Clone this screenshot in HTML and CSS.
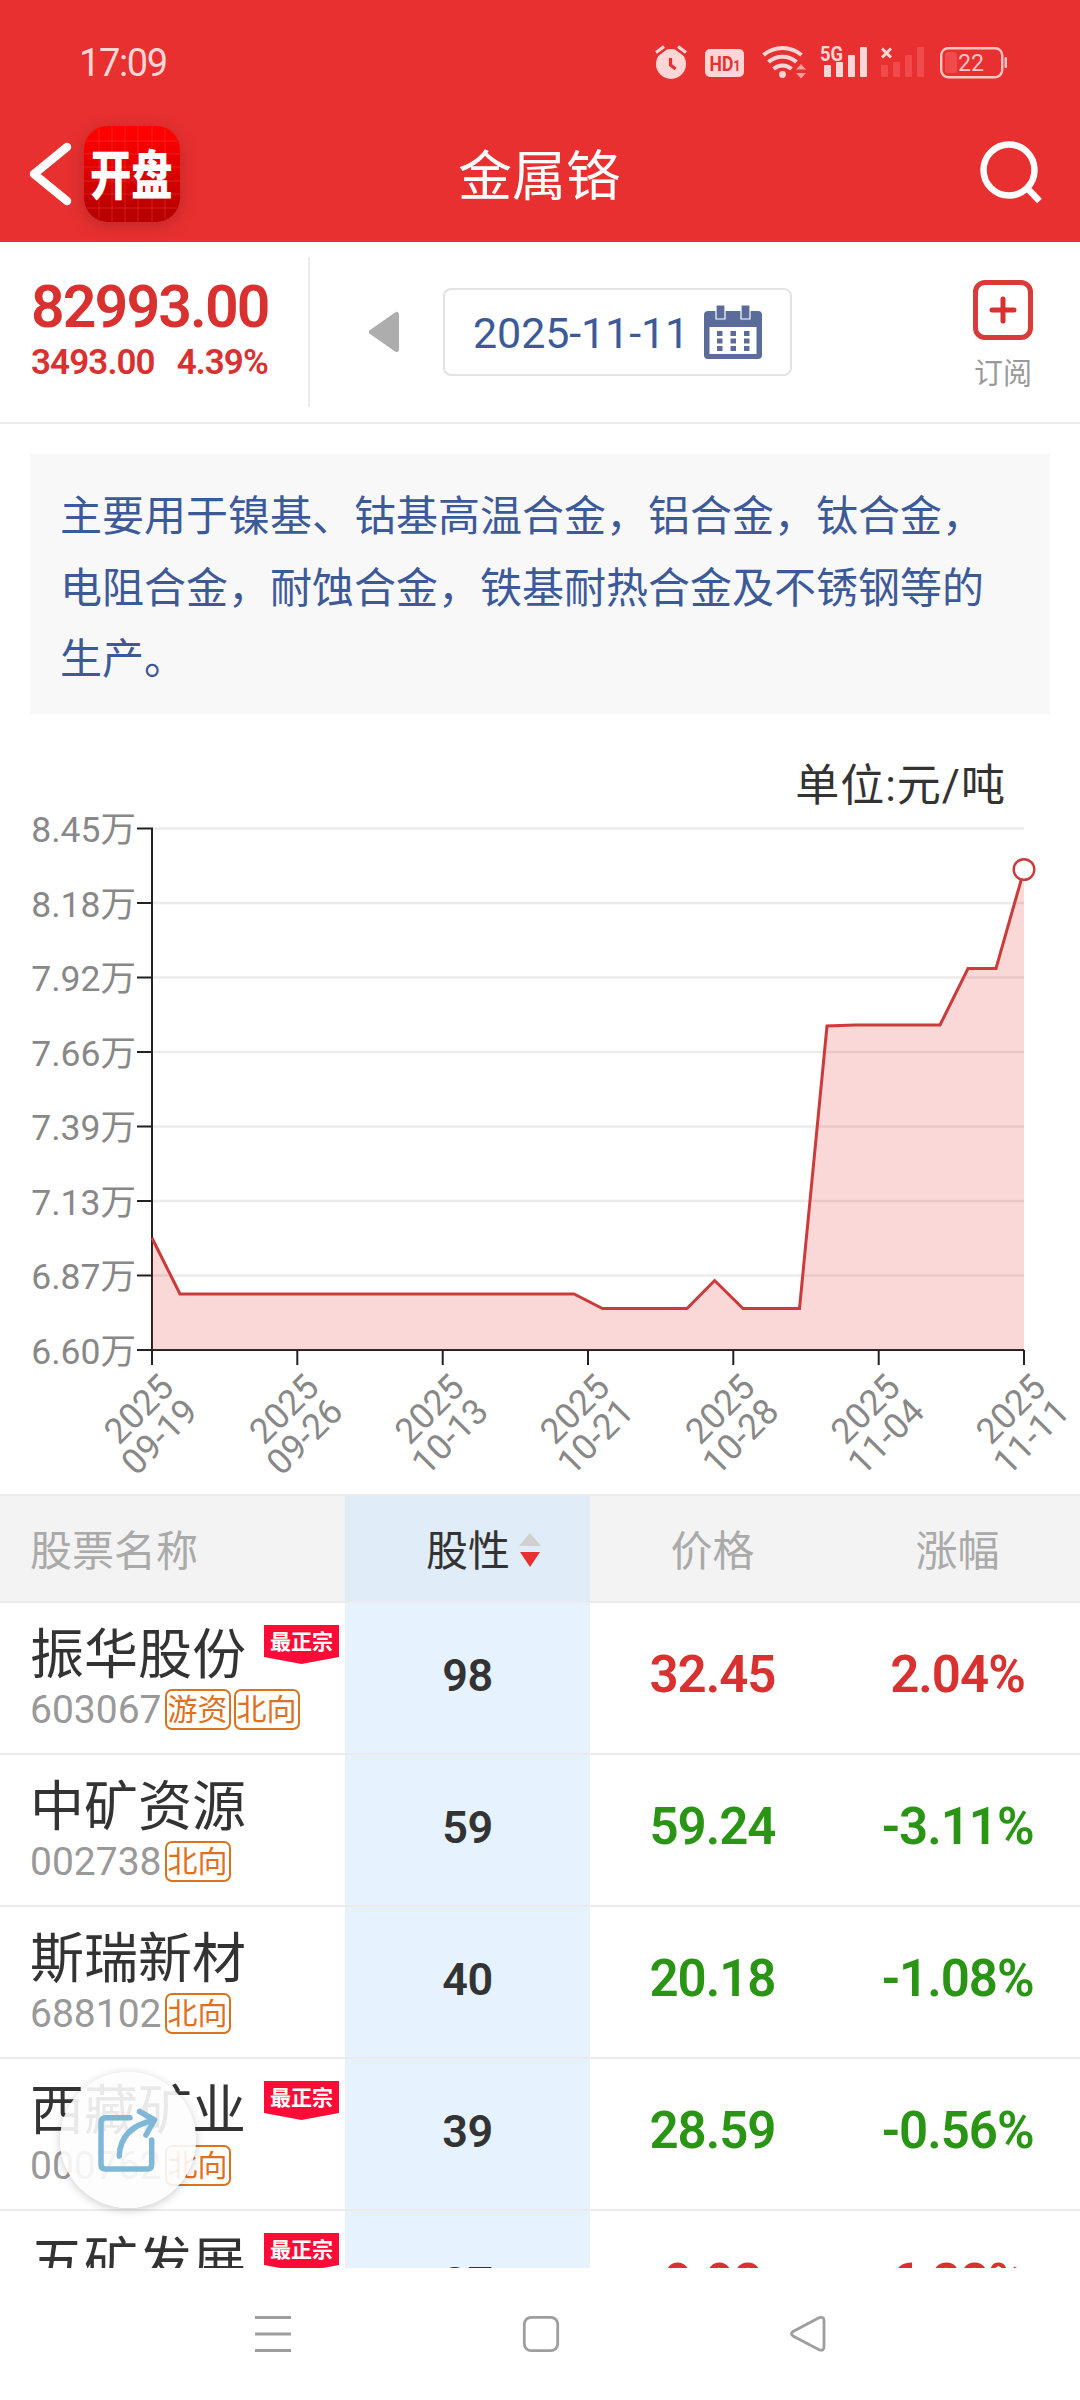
FILE: index.html
```html
<!DOCTYPE html>
<html lang="zh-CN">
<head>
    <meta charset="UTF-8">
    <meta name="viewport" content="width=device-width, initial-scale=1.0">
    <title>金属铬</title>
    <link rel="stylesheet" href="styles.css">
</head>
<body>

<header>
    <!-- 状态栏 -->
    <div class="status-bar">
        <span class="time">17:09</span>
        <div class="status-icons">
            <!-- 闹钟 -->
            <svg width="32" height="36" viewBox="0 0 32 36">
                <circle cx="16" cy="21" r="15" fill="#ffd6d6"/>
                <path d="M1.500 10 9.500 4M30.500 10 22.500 4" stroke="#e83030" stroke-width="7"/>
                <path d="M1 9.500 9 3.500M31 9.500 23 3.500" stroke="#ffd6d6" stroke-width="3.200"/>
                <path d="M15.500 15v7l5 4" fill="none" stroke="#e83030" stroke-width="3.200"/>
            </svg>
            <!-- HD -->
            <svg class="hd" width="39" height="36" viewBox="0 0 39 36">
                <rect y="6" width="39" height="28" rx="5" fill="#ffd6d6"/>
                <text x="4.500" y="27.500" font-size="21" font-weight="700" textLength="31" lengthAdjust="spacingAndGlyphs" fill="#e83030">HD<tspan font-size="15">1</tspan></text>
            </svg>
            <!-- WiFi -->
            <svg class="wifi" width="45" height="36" viewBox="0 0 45 36">
                <g fill="none" stroke="#ffd6d6" stroke-width="4">
                    <path d="M1.500 12a29 29 0 0 1 38 0"/>
                    <path d="M6.500 19a21 21 0 0 1 28 0"/>
                    <path d="M11.500 26a13.500 13.500 0 0 1 18 0"/>
                </g>
                <circle cx="20.500" cy="31.500" r="3.400" fill="#ffd6d6"/>
                <path d="M34 26.500l5-5.500 5 5.500zM34 30l5 5.500 5-5.500z" fill="#ff9c9c"/>
            </svg>
            <!-- 5G 信号 -->
            <svg class="signal" width="48" height="36" viewBox="0 0 48 36">
                <text x="0" y="17.500" font-size="21" font-weight="700" textLength="23" lengthAdjust="spacingAndGlyphs" fill="#ffd6d6">5G</text>
                <g fill="#ffd6d6">
                    <rect x="4" y="22" width="7" height="12" rx="1"/>
                    <rect x="16" y="19" width="7" height="15" rx="1"/>
                    <rect x="28" y="12" width="7" height="22" rx="1"/>
                    <rect x="40" y="4" width="7" height="30" rx="1"/>
                </g>
            </svg>
            <!-- 无信号 -->
            <svg class="no-signal" width="45" height="36" viewBox="0 0 45 36">
                <path d="M2 5.500l9 9M11 5.500l-9 9" stroke="#ffd6d6" stroke-width="3"/>
                <g fill="#f04a4a">
                    <rect x="1" y="22" width="7" height="12" rx="1"/>
                    <rect x="13" y="19" width="7" height="15" rx="1"/>
                    <rect x="25" y="12" width="7" height="22" rx="1"/>
                    <rect x="37" y="4" width="7" height="30" rx="1"/>
                </g>
            </svg>
            <!-- 电池 -->
            <svg class="battery" width="68" height="36" viewBox="0 0 68 36">
                <rect x="1.200" y="5.200" width="61" height="29" rx="7" fill="none" stroke="#ffc4c4" stroke-width="2.400"/>
                <rect x="5" y="9" width="12" height="21" rx="3" fill="#f04a4a"/>
                <rect x="64.500" y="14" width="2.500" height="11" rx="1" fill="#ffc4c4"/>
                <text x="18" y="28" font-size="24" textLength="26" lengthAdjust="spacingAndGlyphs" fill="#ffc4c4">22</text>
            </svg>
        </div>
    </div>

    <!-- 标题栏 -->
    <div class="title-bar">
        <div class="title-left">
            <svg width="44" height="66" viewBox="0 0 44 66">
                <path d="M38 6 5 33l33 27" fill="none" stroke="#fff" stroke-width="8.500" stroke-linecap="round" stroke-linejoin="round"/>
            </svg>
            <svg class="logo" width="96" height="96" viewBox="0 0 96 96">
                <defs>
                    <linearGradient id="logoBg" x1="0" y1="0" x2="0" y2="1">
                        <stop offset="0.100" stop-color="#fe0000"/>
                        <stop offset="0.900" stop-color="#b90000"/>
                    </linearGradient>
                </defs>
                <rect width="96" height="96" rx="24" fill="url(#logoBg)"/>
                <path d="M15 3v90M28 0v96M41 0v96M54 0v96M68 0v96M81 3v90M3 15h90M0 28h96M0 41h96M0 55h96M0 68h96M3 82h90" stroke="#ff6060" stroke-opacity="0.300"/>
                <text class="logo-text" transform="translate(6 68.500) scale(0.780 1)" font-size="53">开盘</text>
            </svg>
        </div>
        <h1>金属铬</h1>
        <svg class="search" width="64" height="66" viewBox="0 0 64 66">
            <circle cx="29" cy="29" r="25.500" fill="none" stroke="#fff" stroke-width="6.500"/>
            <path d="M47 47l12.500 13" stroke="#fff" stroke-width="6.500"/>
        </svg>
    </div>
</header>

<!-- 报价和日期 -->
<section class="quote">
    <div class="quote-price">
        <div class="price">82993.00</div>
        <div class="change"><span>3493.00</span><span>4.39%</span></div>
    </div>
    <svg class="prev" width="32" height="42" viewBox="0 0 32 42">
        <path d="M28.500 3.500v35L3.500 21z" fill="#adadad" stroke="#adadad" stroke-width="5" stroke-linejoin="round"/>
    </svg>
    <div class="date-box">
        <span>2025-11-11</span>
        <svg width="58" height="54" viewBox="0 0 58 54">
            <rect x="0" y="6" width="58" height="48" rx="4" fill="#5b6c9b"/>
            <rect x="5.500" y="22" width="47" height="27" fill="#fff"/>
            <path d="M12 0h9v14h-9zM37 0h9v14h-9z" fill="#5b6c9b" stroke="#fff" stroke-width="1.200"/>
            <path d="M13 26h5.500v5H13zM26.500 26H32v5h-5.500zM40 26h5.500v5H40zM13 33.500h5.500v5H13zM26.500 33.500H32v5h-5.500zM40 33.500h5.500v5H40zM13 41h5.500v5H13zM26.500 41H32v5h-5.500zM40 41h5.500v5H40z" fill="#5b6c9b"/>
        </svg>
    </div>
    <div class="subscribe">
        <svg width="60" height="60" viewBox="0 0 60 60">
            <rect x="2.500" y="2.500" width="55" height="55" rx="9.500" fill="none" stroke="#d93a3a" stroke-width="5"/>
            <path d="M30 19v22M19 30h22" stroke="#d93030" stroke-width="5" stroke-linecap="round"/>
        </svg>
        <span>订阅</span>
    </div>
</section>

<p class="description">主要用于镍基、钴基高温合金，铝合金，钛合金，电阻合金，耐蚀合金，铁基耐热合金及不锈钢等的生产。</p>

<!-- 走势图 -->
<section class="chart">
    <div class="unit">单位:元/吨</div>
    <svg width="1080" height="680" viewBox="0 814 1080 680">
        <path class="grid" d="M152 828.500h872M152 903h872M152 977.500h872M152 1052h872M152 1126.500h872M152 1201h872M152 1275.500h872"/>
        <path class="axis" d="M137 828.500h15V1350M137 903h15M137 977.500h15M137 1052h15M137 1126.500h15M137 1201h15M137 1275.500h15M137 1350h887M152 1350v15M297.300 1350v15M442.700 1350v15M588 1350v15M733.300 1350v15M878.700 1350v15M1024 1350v15"/>
        <path class="area" d="M152 1238 180 1294H574L602.500 1308.500H687L714.600 1280.500 743 1308.500H799.500L827 1026 855 1025H940L968 968.500H996L1024 870V1350H152z"/>
        <path class="line" d="M152 1238 180 1294H574L602.500 1308.500H687L714.600 1280.500 743 1308.500H799.500L827 1026 855 1025H940L968 968.500H996L1024 870"/>
        <circle class="point" cx="1024" cy="869.500" r="10.300"/>
        <g class="label">
            <text x="136" y="842">8.45万</text>
            <text x="136" y="916.500">8.18万</text>
            <text x="136" y="991">7.92万</text>
            <text x="136" y="1065.500">7.66万</text>
            <text x="136" y="1140">7.39万</text>
            <text x="136" y="1214.500">7.13万</text>
            <text x="136" y="1289">6.87万</text>
            <text x="136" y="1363.500">6.60万</text>
        </g>
        <g class="label">
            <g transform="translate(175.500 1389.500) rotate(-45)"><text>2025</text><text y="34">09-19</text></g>
            <g transform="translate(320.800 1389.500) rotate(-45)"><text>2025</text><text y="34">09-26</text></g>
            <g transform="translate(466.200 1389.500) rotate(-45)"><text>2025</text><text y="34">10-13</text></g>
            <g transform="translate(611.500 1389.500) rotate(-45)"><text>2025</text><text y="34">10-21</text></g>
            <g transform="translate(756.800 1389.500) rotate(-45)"><text>2025</text><text y="34">10-28</text></g>
            <g transform="translate(902.200 1389.500) rotate(-45)"><text>2025</text><text y="34">11-04</text></g>
            <g transform="translate(1047.500 1389.500) rotate(-45)"><text>2025</text><text y="34">11-11</text></g>
        </g>
    </svg>
</section>

<!-- 股票列表 -->
<section class="stocks">
    <div class="row head">
        <div class="name-cell">股票名称</div>
        <div class="cell active">
            股性
            <svg width="22" height="34" viewBox="0 0 22 34">
                <path d="M11 0l11 13H0z" fill="#d0d0d0"/>
                <path d="M1 19h20L11 34z" fill="#e83030"/>
            </svg>
        </div>
        <div class="cell">价格</div>
        <div class="cell">涨幅</div>
    </div>

    <div class="row">
        <div class="name-cell">
            <div class="name">振华股份</div>
            <div class="code">603067<span class="tag">游资</span><span class="tag">北向</span></div>
            <div class="badge">最正宗</div>
        </div>
        <div class="cell active">98</div>
        <div class="cell up">32.45</div>
        <div class="cell up">2.04%</div>
    </div>

    <div class="row">
        <div class="name-cell">
            <div class="name">中矿资源</div>
            <div class="code">002738<span class="tag">北向</span></div>
        </div>
        <div class="cell active">59</div>
        <div class="cell down">59.24</div>
        <div class="cell down">-3.11%</div>
    </div>

    <div class="row">
        <div class="name-cell">
            <div class="name">斯瑞新材</div>
            <div class="code">688102<span class="tag">北向</span></div>
        </div>
        <div class="cell active">40</div>
        <div class="cell down">20.18</div>
        <div class="cell down">-1.08%</div>
    </div>

    <div class="row">
        <div class="name-cell">
            <div class="name">西藏矿业</div>
            <div class="code">000762<span class="tag">北向</span></div>
            <div class="badge">最正宗</div>
        </div>
        <div class="cell active">39</div>
        <div class="cell down">28.59</div>
        <div class="cell down">-0.56%</div>
    </div>

    <div class="row">
        <div class="name-cell">
            <div class="name">五矿发展</div>
            <div class="badge">最正宗</div>
        </div>
        <div class="cell active">37</div>
        <div class="cell up">9.98</div>
        <div class="cell up">6.28%</div>
    </div>

    <!-- 分享按钮 -->
    <div class="share">
        <svg width="64" height="68" viewBox="0 0 64 68">
            <g fill="none" stroke="#7fb8d6" stroke-width="5.500" stroke-linecap="round" stroke-linejoin="round">
                <path d="M34 11.700H9.500q-4.500 0-4.500 4.500V58.500q0 4.500 4.500 4.500h41.700q4.500 0 4.500-4.500V34"/>
                <path d="M23.300 50C24 31 36 19 57 14.500"/>
                <path d="M43.500 5.500 58.500 14 50 29"/>
            </g>
        </svg>
    </div>
</section>

<!-- 系统导航 -->
<nav>
    <svg width="36" height="38" viewBox="0 0 36 38">
        <path d="M0 2.500h36M0 19h36M0 35.500h36"/>
    </svg>
    <svg width="36" height="38" viewBox="0 0 36 38">
        <rect x="1.300" y="2.300" width="33.400" height="33.400" rx="7"/>
    </svg>
    <svg width="36" height="38" viewBox="0 0 36 38">
        <path d="M28.500 2.500 2 16.500q-3 2 0 4.500l26.500 14q4.500 1 4.500-3V5.500q0-4-4.500-3z"/>
    </svg>
</nav>

</body>
</html>
```

FILE: styles.css
```css
* {
    box-sizing: border-box;
}

body {
    margin: 0;
    width: 1080px;
    height: 2400px;
    overflow: hidden;
    display: flex;
    flex-direction: column;
    background-color: #fff;
    color: #333;
    font-family: Roboto, "Noto Sans CJK SC", sans-serif;
}

svg {
    display: block;
    flex: none;
    overflow: visible;
}

header {
    height: 242px;
    flex: none;
    background-color: #e83030;
    color: #fff;
}

/* 状态栏 */
.status-bar {
    display: flex;
    justify-content: space-between;
    height: 104px;
    padding: 43px 72px 0 79px;
}

.time {
    font-size: 38px;
    line-height: 40px;
    letter-spacing: -1.4px;
    color: #ffd6d6;
}

.status-icons {
    display: flex;
}

.hd {
    margin-left: 18px;
}

.wifi {
    margin-left: 18px;
}

.signal {
    margin-left: 13px;
}

.no-signal {
    margin-left: 12px;
}

.battery {
    margin-left: 15px;
}

/* 标题栏 */
.title-bar {
    display: grid;
    grid-template-columns: 1fr auto 1fr;
    align-items: center;
    height: 138px;
    padding: 2px 36px 0 29px;
}

.title-left {
    display: flex;
    align-items: center;
    gap: 11px;
    height: 136px;
}

.logo {
    border-radius: 24px;
    box-shadow: 0 3px 16px rgba(120, 30, 30, 0.4);
}

.logo-text {
    font-weight: 900;
    fill: #fff;
}

.title-bar h1 {
    margin: 0;
    padding: 8px 0 0 5px;
    font-size: 54px;
    font-weight: 400;
    line-height: 60px;
}

.search {
    justify-self: end;
}

/* 报价 */
.quote {
    display: flex;
    align-items: center;
    height: 182px;
    flex: none;
    border-bottom: 2px solid #ebebeb;
}

.quote-price {
    width: 310px;
    height: 150px;
    padding: 19px 0 0 31px;
    border-right: 2px solid #ebebeb;
    color: #d93030;
    font-weight: 600;
}

.price {
    font-size: 59px;
    line-height: 62px;
    letter-spacing: -1.9px;
}

.change {
    display: flex;
    gap: 22px;
    margin-top: 4px;
    font-size: 35px;
    line-height: 42px;
    letter-spacing: -0.9px;
}

.prev {
    margin-left: 58px;
}

.date-box {
    display: flex;
    align-items: center;
    justify-content: space-between;
    width: 349px;
    height: 88px;
    margin-left: 43px;
    padding: 0 28px 0 28px;
    border: 2px solid #e3e3e3;
    border-radius: 8px;
    color: #3d5a98;
    font-size: 43px;
}

.date-box span {
    padding-top: 2px;
    letter-spacing: -0.1px;
}

.subscribe {
    display: flex;
    flex-direction: column;
    align-items: center;
    gap: 16px;
    width: 60px;
    padding-top: 8px;
    margin-left: 181px;
    color: #999;
    font-size: 29px;
    line-height: 36px;
}

.description {
    flex: none;
    height: 260px;
    margin: 30px 30px 0;
    padding: 27px 55px 0 30px;
    background-color: #f8f8f8;
    color: #3d5a98;
    font-size: 42px;
    line-height: 71.5px;
}

/* 走势图 */
.chart {
    height: 780px;
    flex: none;
}

.unit {
    height: 100px;
    padding: 42px 74px 0 0;
    font-size: 44px;
    line-height: 60px;
    letter-spacing: 1px;
    text-align: right;
}

.grid {
    stroke: #ebebeb;
    stroke-width: 2.5;
}

.axis {
    fill: none;
    stroke: #222;
    stroke-width: 2;
}

.area {
    fill: #e83030;
    fill-opacity: 0.19;
}

.line {
    fill: none;
    stroke: #cc3a3a;
    stroke-width: 3;
}

.point {
    fill: #fff;
    stroke: #cc3a3a;
    stroke-width: 2.4;
}

.label {
    font-size: 35.5px;
    fill: #888;
    text-anchor: end;
}

/* 股票列表 */
.stocks {
    position: relative;
    height: 774px;
    flex: none;
    overflow: hidden;
    border-top: 2px solid #ebebeb;
}

.row {
    display: grid;
    grid-template-columns: 345px 245px 245px 245px;
    height: 152px;
    border-bottom: 2px solid #ebebeb;
}

.name-cell {
    position: relative;
    padding: 21px 0 0 30px;
}

.name {
    font-size: 54px;
    line-height: 64px;
}

.code {
    display: flex;
    align-items: center;
    gap: 3px;
    height: 43px;
    font-size: 39px;
    color: #999;
}

.tag {
    width: 66px;
    height: 41px;
    border: 2px solid #d9731f;
    border-radius: 7px;
    color: #e07020;
    font-size: 30px;
    line-height: 37px;
    text-align: center;
}

.badge {
    position: absolute;
    top: 22px;
    left: 264px;
    width: 75px;
    height: 39px;
    background-color: #ff0b37;
    clip-path: polygon(0 0, 100% 0, 100% 82%, 50% 100%, 0 82%);
    color: #fff;
    font-size: 21px;
    font-weight: 700;
    line-height: 34px;
    text-align: center;
}

.cell {
    display: flex;
    justify-content: center;
    padding-top: 42px;
    font-size: 51px;
    font-weight: 600;
    line-height: 60px;
    letter-spacing: -1px;
}

.active {
    background-color: #e6f3ff;
    font-size: 45px;
    letter-spacing: -0.5px;
    padding-top: 43px;
}

.up {
    color: #d93030;
}

.down {
    color: #2a9415;
}

.head {
    height: 107px;
    background-color: #f3f3f3;
    color: #aaa;
    font-size: 42px;
}

.head .name-cell {
    padding-top: 26px;
    line-height: 60px;
}

.head .cell {
    align-items: center;
    gap: 9px;
    padding: 6px 0 0;
    font-size: 42px;
    font-weight: 400;
    letter-spacing: 0;
}

.head .active {
    padding-left: 32px;
    background-color: #e0ecf7;
    color: #333;
}

.head svg {
    margin-top: -4px;
}

/* 悬浮在列表上的分享按钮 */
.share {
    position: absolute;
    left: 60px;
    top: 576px;
    display: flex;
    align-items: center;
    justify-content: center;
    width: 136px;
    height: 136px;
    border-radius: 50%;
    background-color: rgba(253, 253, 253, 0.9);
    box-shadow: 0 2px 10px rgba(0, 0, 0, 0.2);
}

nav {
    display: flex;
    justify-content: center;
    gap: 232px;
    height: 132px;
    padding: 47px 0 0 1px;
    flex: none;
}

nav svg {
    fill: none;
    stroke: #9e9e9e;
    stroke-width: 2.8;
}
```
